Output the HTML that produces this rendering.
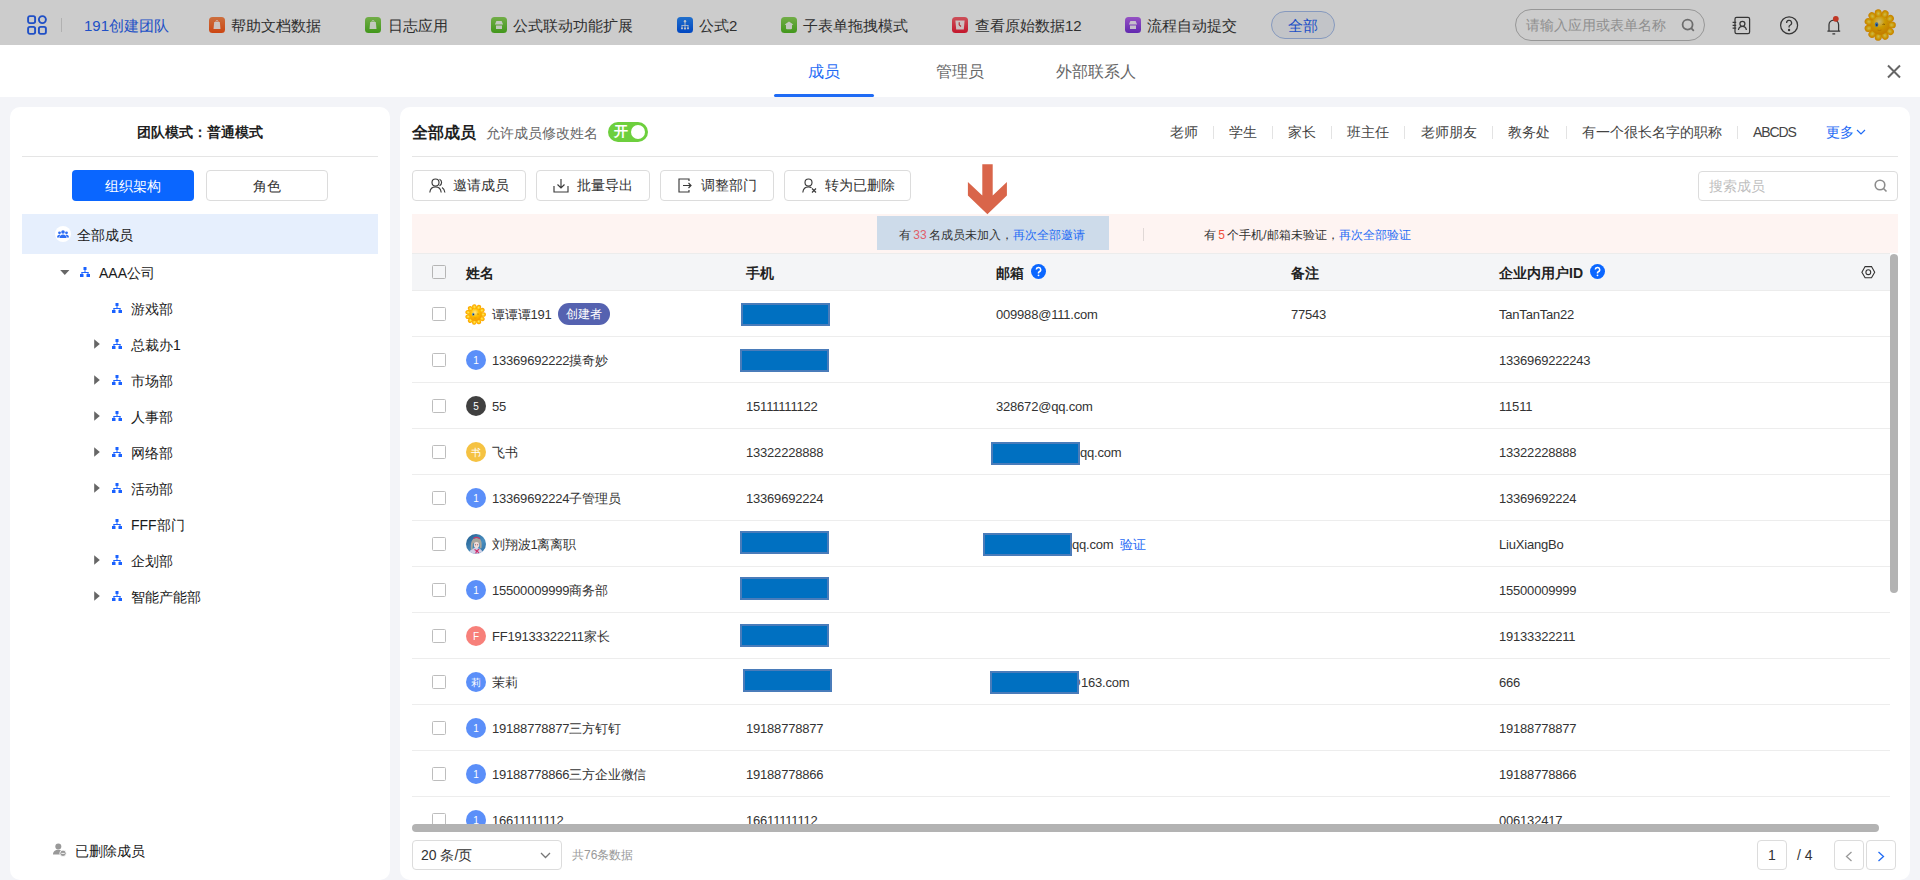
<!DOCTYPE html><html><head><meta charset="utf-8"><style>
*{box-sizing:border-box;margin:0;padding:0}
html,body{width:1920px;height:880px;overflow:hidden;background:#fff;font-family:"Liberation Sans",sans-serif;color:#333}
.a{position:absolute;white-space:nowrap}
.t{position:absolute;white-space:nowrap;line-height:20px}
#hdr{position:absolute;left:0;top:0;width:1920px;height:45px;background:#fff}
#mask{position:absolute;left:0;top:0;width:1920px;height:45px;background:rgba(0,0,0,0.2)}
.app{font-size:15px;color:#3b3b3b;top:16px}
.ico{position:absolute;top:17px;width:16px;height:16px}
.tab{font-size:16px;color:#666;top:62px}
.panel{position:absolute;background:#fff;border-radius:10px}
.btn{position:absolute;height:31px;border:1px solid #dcdcdc;border-radius:4px;background:#fff}
.b14{font-size:14px;color:#333}
.role{font-size:14px;color:#444;top:122px}
.rsep{position:absolute;top:126px;width:1px;height:13px;background:#e3e3e3}
.tree{font-size:14px;color:#1a1a1a}
.cell{font-size:13px;color:#333;letter-spacing:-0.2px}
.cb{position:absolute;width:14px;height:14px;border:1px solid #bdbdbd;border-radius:1.5px;background:#fff}
.av{position:absolute;width:20px;height:20px;border-radius:50%;color:#fff;font-size:10px;line-height:21px;text-align:center}
.red{position:absolute;width:89px;height:23px;background:#0070c1;border:2px solid #4a7cba}
.rl{position:absolute;left:412px;width:1478px;height:1px;background:#ededed}
</style></head><body>
<div id="hdr">
<svg class="a" style="left:27px;top:15px" width="20" height="20" viewBox="0 0 20 20" fill="none" stroke="#2864f8" stroke-width="1.9">
<rect x="1.1" y="1.1" width="7" height="7" rx="1.8"/><rect x="11.9" y="1.1" width="7" height="7" rx="3.5"/>
<rect x="1.1" y="11.9" width="7" height="7" rx="1.8"/><rect x="11.9" y="11.9" width="7" height="7" rx="1.8"/></svg>
<div class="a" style="left:61px;top:18px;width:1px;height:14px;background:#dedede"></div>
<div class="t app" style="left:84px;color:#2864f8">191创建团队</div>
<svg class="ico" style="left:209px" width="16" height="16" viewBox="0 0 16 16"><defs><linearGradient id="g209" x1="0" y1="0" x2="0" y2="1"><stop offset="0" stop-color="#ff8b4e"/><stop offset="1" stop-color="#ff5716"/></linearGradient></defs><rect width="16" height="16" rx="3.5" fill="url(#g209)"/><path d="M5.2 5h5.6l.7 7H4.5z" fill="#fff" opacity=".92"/><circle cx="8" cy="4.6" r="1.1" fill="none" stroke="#fff" stroke-width=".8" opacity=".92"/></svg>
<div class="t app" style="left:231px">帮助文档数据</div>
<svg class="ico" style="left:365px" width="16" height="16" viewBox="0 0 16 16"><defs><linearGradient id="g365" x1="0" y1="0" x2="0" y2="1"><stop offset="0" stop-color="#8fd95a"/><stop offset="1" stop-color="#52bd22"/></linearGradient></defs><rect width="16" height="16" rx="3.5" fill="url(#g365)"/><path d="M5.2 5h5.6l.7 7H4.5z" fill="#fff" opacity=".92"/><circle cx="8" cy="4.6" r="1.1" fill="none" stroke="#fff" stroke-width=".8" opacity=".92"/></svg>
<div class="t app" style="left:388px">日志应用</div>
<svg class="ico" style="left:491px" width="16" height="16" viewBox="0 0 16 16"><defs><linearGradient id="g491" x1="0" y1="0" x2="0" y2="1"><stop offset="0" stop-color="#8fd95a"/><stop offset="1" stop-color="#52bd22"/></linearGradient></defs><rect width="16" height="16" rx="3.5" fill="url(#g491)"/><path d="M5.4 4h5.2l1.5 3.4H3.9z M5 8.6h6V12H5z" fill="#fff" opacity=".92"/></svg>
<div class="t app" style="left:513px">公式联动功能扩展</div>
<svg class="ico" style="left:677px" width="16" height="16" viewBox="0 0 16 16"><defs><linearGradient id="g677" x1="0" y1="0" x2="0" y2="1"><stop offset="0" stop-color="#2a8cff"/><stop offset="1" stop-color="#0058f2"/></linearGradient></defs><rect width="16" height="16" rx="3.5" fill="url(#g677)"/><g fill="#fff" opacity=".92"><circle cx="8" cy="4.3" r="1.2"/><rect x="7.55" y="5" width=".9" height="6.5"/><rect x="4.6" y="8.2" width="6.8" height=".8"/><rect x="4.6" y="8.2" width=".8" height="2.5"/><rect x="10.6" y="8.2" width=".8" height="2.5"/><circle cx="5" cy="11.3" r="1.1"/><circle cx="8" cy="11.6" r="1.1"/><circle cx="11" cy="11.3" r="1.1"/></g></svg>
<div class="t app" style="left:699px">公式2</div>
<svg class="ico" style="left:781px" width="16" height="16" viewBox="0 0 16 16"><defs><linearGradient id="g781" x1="0" y1="0" x2="0" y2="1"><stop offset="0" stop-color="#8fd95a"/><stop offset="1" stop-color="#52bd22"/></linearGradient></defs><rect width="16" height="16" rx="3.5" fill="url(#g781)"/><path d="M8 4.6 12.3 7.6 11 8v3.2q0 1-1 1H6q-1 0-1-1V8l-1.3-.4z" fill="#fff" opacity=".92"/></svg>
<div class="t app" style="left:803px">子表单拖拽模式</div>
<svg class="ico" style="left:952px" width="16" height="16" viewBox="0 0 16 16"><defs><linearGradient id="g952" x1="0" y1="0" x2="0" y2="1"><stop offset="0" stop-color="#ff6470"/><stop offset="1" stop-color="#f51c38"/></linearGradient></defs><rect width="16" height="16" rx="3.5" fill="url(#g952)"/><path d="M3.4 3.6h9.2l-.8 8.9H4.2z" fill="#fff" opacity=".92"/><path d="M7.2 5.2v2.6l1.8 1.7" stroke="#e0303c" stroke-width="1.1" fill="none"/></svg>
<div class="t app" style="left:975px">查看原始数据12</div>
<svg class="ico" style="left:1125px" width="16" height="16" viewBox="0 0 16 16"><defs><linearGradient id="g1125" x1="0" y1="0" x2="0" y2="1"><stop offset="0" stop-color="#bb66f5"/><stop offset="1" stop-color="#7a33dc"/></linearGradient></defs><rect width="16" height="16" rx="3.5" fill="url(#g1125)"/><path d="M5.4 4h5.2l1.5 3.4H3.9z M5 8.6h6V12H5z" fill="#fff" opacity=".92"/></svg>
<div class="t app" style="left:1147px">流程自动提交</div>
<div class="a" style="left:1271px;top:11px;width:64px;height:28px;border-radius:14px;background:#f3f6fb;border:1px solid #a8c0ee"></div>
<div class="t app" style="left:1288px;top:16px;color:#2864f8">全部</div>
<div class="a" style="left:1515px;top:9px;width:190px;height:32px;border-radius:16px;border:1px solid #bdbdbd;background:#fff"></div>
<div class="t" style="left:1526px;top:15px;font-size:14px;color:#b3b3b3">请输入应用或表单名称</div>
<svg class="a" style="left:1681px;top:18px" width="15" height="14" viewBox="0 0 15 14" fill="none" stroke="#888" stroke-width="1.8"><circle cx="6.6" cy="6.6" r="5"/><path d="M10.2 10.2l2.6 2.6"/></svg>
<svg class="a" style="left:1720px;top:8px" width="130" height="32" viewBox="1720 8 130 32" fill="none" stroke="#444" stroke-width="1.25"><rect x="1735" y="17.4" width="14.6" height="16.2" rx="1.6"/><path d="M1732.6 22.4h3.6M1732.6 25.3h3.6M1732.6 28.2h3.6"/><circle cx="1742.4" cy="23.8" r="2.5"/><path d="M1738.4 30c.4-2.400 1.900-3.600 4-3.600s3.600 1.200 4 3.600"/><circle cx="1789.1" cy="25.3" r="8.5"/><path d="M1786.6 22.900a2.500 2.500 0 1 1 3.500 2.300c-.600.300-1 .700-1 1.400v.800"/><path d="M1827.4 31.2h12.8M1829 31.2v-6.400a4.800 4.800 0 0 1 9.600 0v6.400M1832.400 33.900h2.800"/><circle cx="1789.1" cy="30" r=".55" fill="#444"/><circle cx="1835.8" cy="18.8" r="2.9" fill="#f0452f" stroke="none"/></svg>
<svg class="a" style="left:1864px;top:9px" width="32" height="32" viewBox="0 0 32 32"><defs><radialGradient id="sunA" cx=".5" cy=".5" r=".6"><stop offset="0" stop-color="#ffec60"/><stop offset=".55" stop-color="#ffb800"/><stop offset="1" stop-color="#f39000"/></radialGradient><radialGradient id="sunAf" cx=".45" cy=".3" r=".7"><stop offset="0" stop-color="#ffe890"/><stop offset=".45" stop-color="#ffc000"/><stop offset="1" stop-color="#f39a00"/></radialGradient></defs><g fill="url(#sunA)"><ellipse cx="27.60" cy="16.00" rx="4.3" ry="3.6" transform="rotate(0.0 27.60 16.00)"/><ellipse cx="25.76" cy="22.27" rx="4.3" ry="3.6" transform="rotate(32.7 25.76 22.27)"/><ellipse cx="20.82" cy="26.55" rx="4.3" ry="3.6" transform="rotate(65.5 20.82 26.55)"/><ellipse cx="14.35" cy="27.48" rx="4.3" ry="3.6" transform="rotate(98.2 14.35 27.48)"/><ellipse cx="8.40" cy="24.77" rx="4.3" ry="3.6" transform="rotate(130.9 8.40 24.77)"/><ellipse cx="4.87" cy="19.27" rx="4.3" ry="3.6" transform="rotate(163.6 4.87 19.27)"/><ellipse cx="4.87" cy="12.73" rx="4.3" ry="3.6" transform="rotate(196.4 4.87 12.73)"/><ellipse cx="8.40" cy="7.23" rx="4.3" ry="3.6" transform="rotate(229.1 8.40 7.23)"/><ellipse cx="14.35" cy="4.52" rx="4.3" ry="3.6" transform="rotate(261.8 14.35 4.52)"/><ellipse cx="20.82" cy="5.45" rx="4.3" ry="3.6" transform="rotate(294.5 20.82 5.45)"/><ellipse cx="25.76" cy="9.73" rx="4.3" ry="3.6" transform="rotate(327.3 25.76 9.73)"/></g><circle cx="16" cy="16.5" r="9.3" fill="url(#sunAf)"/><ellipse cx="12.6" cy="15.6" rx="1.7" ry="2.4" fill="#4a8ad0"/><circle cx="12.8" cy="16" r=".8" fill="#102030"/><path d="M18.5 15.5q1.3-.8 2.4 0" stroke="#8a5a00" stroke-width=".8" fill="none"/><path d="M13.5 21q2 1 4 0" stroke="#d98a00" stroke-width=".8" fill="none"/></svg>
</div>
<div id="mask"></div>
<div class="a" style="left:0;top:45px;width:1920px;height:52px;background:#fff"></div>
<div class="a" style="left:0;top:97px;width:1920px;height:783px;background:#f3f4f8"></div>
<div class="t tab" style="left:808px;color:#1f6bf5">成员</div>
<div class="a" style="left:774px;top:94px;width:100px;height:3px;border-radius:2px;background:#1f6bf5"></div>
<div class="t tab" style="left:936px">管理员</div>
<div class="t tab" style="left:1056px">外部联系人</div>
<svg class="a" style="left:1886px;top:64px" width="16" height="15" viewBox="0 0 16 15" stroke="#666" stroke-width="2"><path d="M2 1.5l12 12M14 1.5l-12 12"/></svg>
<div class="panel" style="left:10px;top:107px;width:380px;height:773px"></div>
<div class="panel" style="left:400px;top:107px;width:1510px;height:773px"></div>
<div class="t" style="left:137px;top:122px;font-size:14px;font-weight:bold;color:#1f1f1f">团队模式：普通模式</div>
<div class="a" style="left:22px;top:156px;width:356px;height:1px;background:#e5e5e5"></div>
<div class="a" style="left:72px;top:170px;width:122px;height:31px;border-radius:4px;background:#0a66ff"></div>
<div class="t" style="left:105px;top:176px;font-size:14px;color:#fff">组织架构</div>
<div class="btn" style="left:206px;top:170px;width:122px"></div>
<div class="t" style="left:253px;top:176px;font-size:14px;color:#333">角色</div>
<div class="a" style="left:22px;top:214px;width:356px;height:40px;background:#e6effd"></div>
<div class="a" style="left:55px;top:226px;width:16px;height:16px;border-radius:50%;background:#fff"></div>
<svg class="a" style="left:57px;top:230px" width="12" height="8" viewBox="0 0 12 8" fill="#2f6ff5"><circle cx="6" cy="2" r="1.8"/><circle cx="2.5" cy="2.8" r="1.4"/><circle cx="9.5" cy="2.8" r="1.4"/><path d="M2.5 8c0-2.3 1.5-3.6 3.5-3.6S9.5 5.7 9.5 8z"/><path d="M0 7.6c0-1.8.9-2.9 2.4-2.9.5 0 .8.1 1 .2C2.6 5.6 2.2 6.6 2.2 7.6zM12 7.6c0-1.8-.9-2.9-2.4-2.9-.5 0-.8.1-1 .2.8.7 1.2 1.7 1.2 2.7z"/></svg>
<div class="t tree" style="left:77px;top:225px">全部成员</div>
<svg class="a" style="left:60px;top:270px" width="10" height="6" viewBox="0 0 10 6" fill="#666"><path d="M.2 0h9.2L4.8 5z"/></svg>
<svg class="a" style="left:80px;top:267px" width="10" height="10" viewBox="0 0 10 10" fill="#1a62ff"><rect x="3.5" y="0" width="3" height="3"/><rect x="4.5" y="3" width="1" height="2.5"/><rect x="1.5" y="5" width="7" height="1"/><rect x="1.5" y="5" width="1" height="2"/><rect x="7.5" y="5" width="1" height="2"/><rect x="0" y="7" width="3.5" height="3"/><rect x="6.5" y="7" width="3.5" height="3"/></svg>
<div class="t tree" style="left:99px;top:263px">AAA公司</div>
<svg class="a" style="left:112px;top:303px" width="10" height="10" viewBox="0 0 10 10" fill="#1a62ff"><rect x="3.5" y="0" width="3" height="3"/><rect x="4.5" y="3" width="1" height="2.5"/><rect x="1.5" y="5" width="7" height="1"/><rect x="1.5" y="5" width="1" height="2"/><rect x="7.5" y="5" width="1" height="2"/><rect x="0" y="7" width="3.5" height="3"/><rect x="6.5" y="7" width="3.5" height="3"/></svg>
<div class="t tree" style="left:131px;top:299px">游戏部</div>
<svg class="a" style="left:94px;top:339px" width="6" height="10" viewBox="0 0 6 10" fill="#666"><path d="M.2 .3v9.4l5.6-4.7z"/></svg>
<svg class="a" style="left:112px;top:339px" width="10" height="10" viewBox="0 0 10 10" fill="#1a62ff"><rect x="3.5" y="0" width="3" height="3"/><rect x="4.5" y="3" width="1" height="2.5"/><rect x="1.5" y="5" width="7" height="1"/><rect x="1.5" y="5" width="1" height="2"/><rect x="7.5" y="5" width="1" height="2"/><rect x="0" y="7" width="3.5" height="3"/><rect x="6.5" y="7" width="3.5" height="3"/></svg>
<div class="t tree" style="left:131px;top:335px">总裁办1</div>
<svg class="a" style="left:94px;top:375px" width="6" height="10" viewBox="0 0 6 10" fill="#666"><path d="M.2 .3v9.4l5.6-4.7z"/></svg>
<svg class="a" style="left:112px;top:375px" width="10" height="10" viewBox="0 0 10 10" fill="#1a62ff"><rect x="3.5" y="0" width="3" height="3"/><rect x="4.5" y="3" width="1" height="2.5"/><rect x="1.5" y="5" width="7" height="1"/><rect x="1.5" y="5" width="1" height="2"/><rect x="7.5" y="5" width="1" height="2"/><rect x="0" y="7" width="3.5" height="3"/><rect x="6.5" y="7" width="3.5" height="3"/></svg>
<div class="t tree" style="left:131px;top:371px">市场部</div>
<svg class="a" style="left:94px;top:411px" width="6" height="10" viewBox="0 0 6 10" fill="#666"><path d="M.2 .3v9.4l5.6-4.7z"/></svg>
<svg class="a" style="left:112px;top:411px" width="10" height="10" viewBox="0 0 10 10" fill="#1a62ff"><rect x="3.5" y="0" width="3" height="3"/><rect x="4.5" y="3" width="1" height="2.5"/><rect x="1.5" y="5" width="7" height="1"/><rect x="1.5" y="5" width="1" height="2"/><rect x="7.5" y="5" width="1" height="2"/><rect x="0" y="7" width="3.5" height="3"/><rect x="6.5" y="7" width="3.5" height="3"/></svg>
<div class="t tree" style="left:131px;top:407px">人事部</div>
<svg class="a" style="left:94px;top:447px" width="6" height="10" viewBox="0 0 6 10" fill="#666"><path d="M.2 .3v9.4l5.6-4.7z"/></svg>
<svg class="a" style="left:112px;top:447px" width="10" height="10" viewBox="0 0 10 10" fill="#1a62ff"><rect x="3.5" y="0" width="3" height="3"/><rect x="4.5" y="3" width="1" height="2.5"/><rect x="1.5" y="5" width="7" height="1"/><rect x="1.5" y="5" width="1" height="2"/><rect x="7.5" y="5" width="1" height="2"/><rect x="0" y="7" width="3.5" height="3"/><rect x="6.5" y="7" width="3.5" height="3"/></svg>
<div class="t tree" style="left:131px;top:443px">网络部</div>
<svg class="a" style="left:94px;top:483px" width="6" height="10" viewBox="0 0 6 10" fill="#666"><path d="M.2 .3v9.4l5.6-4.7z"/></svg>
<svg class="a" style="left:112px;top:483px" width="10" height="10" viewBox="0 0 10 10" fill="#1a62ff"><rect x="3.5" y="0" width="3" height="3"/><rect x="4.5" y="3" width="1" height="2.5"/><rect x="1.5" y="5" width="7" height="1"/><rect x="1.5" y="5" width="1" height="2"/><rect x="7.5" y="5" width="1" height="2"/><rect x="0" y="7" width="3.5" height="3"/><rect x="6.5" y="7" width="3.5" height="3"/></svg>
<div class="t tree" style="left:131px;top:479px">活动部</div>
<svg class="a" style="left:112px;top:519px" width="10" height="10" viewBox="0 0 10 10" fill="#1a62ff"><rect x="3.5" y="0" width="3" height="3"/><rect x="4.5" y="3" width="1" height="2.5"/><rect x="1.5" y="5" width="7" height="1"/><rect x="1.5" y="5" width="1" height="2"/><rect x="7.5" y="5" width="1" height="2"/><rect x="0" y="7" width="3.5" height="3"/><rect x="6.5" y="7" width="3.5" height="3"/></svg>
<div class="t tree" style="left:131px;top:515px">FFF部门</div>
<svg class="a" style="left:94px;top:555px" width="6" height="10" viewBox="0 0 6 10" fill="#666"><path d="M.2 .3v9.4l5.6-4.7z"/></svg>
<svg class="a" style="left:112px;top:555px" width="10" height="10" viewBox="0 0 10 10" fill="#1a62ff"><rect x="3.5" y="0" width="3" height="3"/><rect x="4.5" y="3" width="1" height="2.5"/><rect x="1.5" y="5" width="7" height="1"/><rect x="1.5" y="5" width="1" height="2"/><rect x="7.5" y="5" width="1" height="2"/><rect x="0" y="7" width="3.5" height="3"/><rect x="6.5" y="7" width="3.5" height="3"/></svg>
<div class="t tree" style="left:131px;top:551px">企划部</div>
<svg class="a" style="left:94px;top:591px" width="6" height="10" viewBox="0 0 6 10" fill="#666"><path d="M.2 .3v9.4l5.6-4.7z"/></svg>
<svg class="a" style="left:112px;top:591px" width="10" height="10" viewBox="0 0 10 10" fill="#1a62ff"><rect x="3.5" y="0" width="3" height="3"/><rect x="4.5" y="3" width="1" height="2.5"/><rect x="1.5" y="5" width="7" height="1"/><rect x="1.5" y="5" width="1" height="2"/><rect x="7.5" y="5" width="1" height="2"/><rect x="0" y="7" width="3.5" height="3"/><rect x="6.5" y="7" width="3.5" height="3"/></svg>
<div class="t tree" style="left:131px;top:587px">智能产能部</div>
<svg class="a" style="left:53px;top:843px" width="14" height="14" viewBox="0 0 14 14"><circle cx="5.3" cy="3.6" r="3" fill="#999"/><path d="M0 11.5c0-3 2.2-4.8 5.3-4.8 1.4 0 2.5.4 3.3 1A3.6 3.6 0 0 0 7.6 11.5z" fill="#999"/><circle cx="10" cy="10.3" r="3.2" fill="#999" stroke="#fff" stroke-width=".9"/><rect x="8.3" y="9.9" width="3.4" height=".9" fill="#fff"/></svg>
<div class="t tree" style="left:75px;top:841px">已删除成员</div>
<div class="t" style="left:412px;top:123px;font-size:16px;font-weight:bold;color:#1f1f1f">全部成员</div>
<div class="t" style="left:486px;top:123px;font-size:14px;color:#666">允许成员修改姓名</div>
<div class="a" style="left:608px;top:122px;width:40px;height:20px;border-radius:10px;background:#6dcf3d"></div>
<div class="a" style="left:631px;top:125px;width:14px;height:14px;border-radius:50%;background:#fff"></div>
<div class="t" style="left:614px;top:121px;font-size:14px;font-weight:bold;color:#fff">开</div>
<div class="t role" style="left:1170px">老师</div>
<div class="t role" style="left:1229px">学生</div>
<div class="t role" style="left:1288px">家长</div>
<div class="t role" style="left:1347px">班主任</div>
<div class="t role" style="left:1421px">老师朋友</div>
<div class="t role" style="left:1508px">教务处</div>
<div class="t role" style="left:1582px">有一个很长名字的职称</div>
<div class="t role" style="left:1753px"><span style="letter-spacing:-1.1px">ABCDS</span></div>
<div class="rsep" style="left:1213px"></div>
<div class="rsep" style="left:1272px"></div>
<div class="rsep" style="left:1331px"></div>
<div class="rsep" style="left:1404px"></div>
<div class="rsep" style="left:1492px"></div>
<div class="rsep" style="left:1566px"></div>
<div class="rsep" style="left:1737px"></div>
<div class="t role" style="left:1826px;color:#1f6bf5">更多</div>
<svg class="a" style="left:1856px;top:129px" width="10" height="6" viewBox="0 0 10 6" fill="none" stroke="#1f6bf5" stroke-width="1.2"><path d="M1 1l4 4 4-4"/></svg>
<div class="a" style="left:412px;top:156px;width:1486px;height:1px;background:#e5e5e5"></div>
<div class="btn" style="left:412px;top:170px;width:114px"></div>
<svg class="a" style="left:429px;top:178px" width="17" height="15" viewBox="0 0 17 15" fill="none" stroke="#3a3a3a" stroke-width="1.15"><circle cx="6.5" cy="4.5" r="3.5"/><path d="M.8 14.5c.4-3.6 2.6-5.6 5.7-5.6s5.3 2 5.7 5.6"/><path d="M10.5 1.3a3.5 3.5 0 0 1 0 6.4M13 9.5c1.6.9 2.6 2.600 2.900 5"/></svg>
<div class="t b14" style="left:453px;top:175px">邀请成员</div>
<div class="btn" style="left:536px;top:170px;width:114px"></div>
<svg class="a" style="left:553px;top:178px" width="16" height="15" viewBox="0 0 16 15" fill="none" stroke="#3a3a3a" stroke-width="1.15"><path d="M1 8v6h14V8M8 1v9M4.5 6.5 8 10l3.5-3.5"/></svg>
<div class="t b14" style="left:577px;top:175px">批量导出</div>
<div class="btn" style="left:660px;top:170px;width:114px"></div>
<svg class="a" style="left:678px;top:178px" width="14" height="15" viewBox="0 0 14 15" fill="none" stroke="#3a3a3a" stroke-width="1.15"><path d="M11 3V1H1v13h10v-2"/><path d="M5 7.5h8M10.5 5 13 7.5 10.5 10"/></svg>
<div class="t b14" style="left:701px;top:175px">调整部门</div>
<div class="btn" style="left:784px;top:170px;width:127px"></div>
<svg class="a" style="left:802px;top:178px" width="15" height="15" viewBox="0 0 15 15" fill="none" stroke="#3a3a3a" stroke-width="1.15"><circle cx="6.5" cy="4.5" r="3.5"/><path d="M.8 14.5c.4-3.6 2.6-5.6 5.7-5.6 1.2 0 2.200.3 3 .8"/><path d="M10 10.5l4 4M14 10.5l-4 4" stroke-width="1.2"/></svg>
<div class="t b14" style="left:825px;top:175px">转为已删除</div>
<div class="btn" style="left:1698px;top:171px;width:200px;height:30px;border-radius:4px"></div>
<div class="t" style="left:1709px;top:176px;font-size:14px;color:#bfbfbf">搜索成员</div>
<svg class="a" style="left:1874px;top:179px" width="14" height="14" viewBox="0 0 14 14" fill="none" stroke="#8c8c8c" stroke-width="1.6"><circle cx="6" cy="6" r="4.8"/><path d="M9.5 9.5l3 3"/></svg>
<div class="a" style="left:412px;top:214px;width:1486px;height:39px;background:#fef4f2"></div>
<div class="a" style="left:877px;top:216px;width:232px;height:34px;background:#cddbea"></div>
<div class="t" style="left:899px;top:225px;font-size:12px;color:#333;word-spacing:-1px">有 <span style="color:#e0606a">33</span> 名成员未加入，<span style="color:#1f6bf5">再次全部邀请</span></div>
<div class="a" style="left:1143px;top:228px;width:1px;height:13px;background:#e0d8d6"></div>
<div class="t" style="left:1204px;top:225px;font-size:12px;color:#333;word-spacing:-1px">有 <span style="color:#f0503c">5</span> 个手机/邮箱未验证，<span style="color:#1f6bf5">再次全部验证</span></div>
<svg class="a" style="left:960px;top:160px" width="55" height="60" viewBox="960 160 55 60"><path d="M982.3 164.2H992.7V195.6L1006.9 182V195.6L987.4 214.3 967.9 195.6V182L982.3 195.6Z" fill="#d9654a"/></svg>
<div class="a" style="left:412px;top:253px;width:1478px;height:38px;background:#f4f5f7;border-top:1px solid #ececec;border-bottom:1px solid #ececec"></div>
<div class="cb" style="left:432px;top:265px;background:transparent;border-color:#b5b5b5"></div>
<div class="t" style="left:466px;top:263px;font-size:14px;font-weight:bold;color:#222">姓名</div>
<div class="t" style="left:746px;top:263px;font-size:14px;font-weight:bold;color:#222">手机</div>
<div class="t" style="left:996px;top:263px;font-size:14px;font-weight:bold;color:#222">邮箱</div>
<div class="t" style="left:1291px;top:263px;font-size:14px;font-weight:bold;color:#222">备注</div>
<div class="t" style="left:1499px;top:263px;font-size:14px;font-weight:bold;color:#222">企业内用户ID</div>
<svg class="a" style="left:1031px;top:264px" width="15" height="15" viewBox="0 0 15 15"><circle cx="7.5" cy="7.5" r="7.5" fill="#0a66ff"/><path d="M5.3 5.6a2.2 2.2 0 1 1 3 2.1c-.5.2-.8.6-.8 1.1v.7" stroke="#fff" stroke-width="1.5" fill="none"/><circle cx="7.5" cy="11.3" r=".9" fill="#fff"/></svg>
<svg class="a" style="left:1590px;top:264px" width="15" height="15" viewBox="0 0 15 15"><circle cx="7.5" cy="7.5" r="7.5" fill="#0a66ff"/><path d="M5.3 5.6a2.2 2.2 0 1 1 3 2.1c-.5.2-.8.6-.8 1.1v.7" stroke="#fff" stroke-width="1.5" fill="none"/><circle cx="7.5" cy="11.3" r=".9" fill="#fff"/></svg>
<svg class="a" style="left:1861px;top:266px" width="15" height="13" viewBox="0 0 15 13" fill="none" stroke="#333" stroke-width="1.1"><path d="M4.1 .6h6.4l3.2 5.6-3.2 5.6H4.1L.9 6.2z"/><circle cx="7.3" cy="6.2" r="2.4"/></svg>
<div class="a" style="left:412px;top:291px;width:1478px;height:533px;overflow:hidden">
<div class="cb" style="left:20px;top:16px"></div>
<svg class="a" style="left:53px;top:13px" width="21" height="21" viewBox="0 0 32 32"><defs><radialGradient id="sunB" cx=".5" cy=".5" r=".6"><stop offset="0" stop-color="#ffec60"/><stop offset=".55" stop-color="#ffb800"/><stop offset="1" stop-color="#f39000"/></radialGradient><radialGradient id="sunBf" cx=".45" cy=".3" r=".7"><stop offset="0" stop-color="#ffe890"/><stop offset=".45" stop-color="#ffc000"/><stop offset="1" stop-color="#f39a00"/></radialGradient></defs><g fill="url(#sunB)"><ellipse cx="27.60" cy="16.00" rx="4.3" ry="3.6" transform="rotate(0.0 27.60 16.00)"/><ellipse cx="25.76" cy="22.27" rx="4.3" ry="3.6" transform="rotate(32.7 25.76 22.27)"/><ellipse cx="20.82" cy="26.55" rx="4.3" ry="3.6" transform="rotate(65.5 20.82 26.55)"/><ellipse cx="14.35" cy="27.48" rx="4.3" ry="3.6" transform="rotate(98.2 14.35 27.48)"/><ellipse cx="8.40" cy="24.77" rx="4.3" ry="3.6" transform="rotate(130.9 8.40 24.77)"/><ellipse cx="4.87" cy="19.27" rx="4.3" ry="3.6" transform="rotate(163.6 4.87 19.27)"/><ellipse cx="4.87" cy="12.73" rx="4.3" ry="3.6" transform="rotate(196.4 4.87 12.73)"/><ellipse cx="8.40" cy="7.23" rx="4.3" ry="3.6" transform="rotate(229.1 8.40 7.23)"/><ellipse cx="14.35" cy="4.52" rx="4.3" ry="3.6" transform="rotate(261.8 14.35 4.52)"/><ellipse cx="20.82" cy="5.45" rx="4.3" ry="3.6" transform="rotate(294.5 20.82 5.45)"/><ellipse cx="25.76" cy="9.73" rx="4.3" ry="3.6" transform="rotate(327.3 25.76 9.73)"/></g><circle cx="16" cy="16.5" r="9.3" fill="url(#sunBf)"/><ellipse cx="12.6" cy="15.6" rx="1.7" ry="2.4" fill="#4a8ad0"/><circle cx="12.8" cy="16" r=".8" fill="#102030"/><path d="M18.5 15.5q1.3-.8 2.4 0" stroke="#8a5a00" stroke-width=".8" fill="none"/><path d="M13.5 21q2 1 4 0" stroke="#d98a00" stroke-width=".8" fill="none"/></svg>
<div class="t cell" style="left:80px;top:14px">谭谭谭191</div>
<div class="a" style="left:146px;top:12px;width:52px;height:22px;border-radius:11px;background:#5562b0;color:#fff;font-size:12px;line-height:22px;text-align:center">创建者</div>
<div class="t cell" style="left:584px;top:14px">009988@111.com</div>
<div class="t cell" style="left:879px;top:14px">77543</div>
<div class="t cell" style="left:1087px;top:14px">TanTanTan22</div>
<div class="a" style="left:0;top:45px;width:1478px;height:1px;background:#ededed"></div>
<div class="cb" style="left:20px;top:62px"></div>
<div class="av" style="left:54px;top:59px;background:#5b8ff9">1</div>
<div class="t cell" style="left:80px;top:60px">13369692222摸奇妙</div>
<div class="t cell" style="left:1087px;top:60px">1336969222243</div>
<div class="a" style="left:0;top:91px;width:1478px;height:1px;background:#ededed"></div>
<div class="cb" style="left:20px;top:108px"></div>
<div class="av" style="left:54px;top:105px;background:#404040">5</div>
<div class="t cell" style="left:80px;top:106px">55</div>
<div class="t cell" style="left:334px;top:106px">15111111122</div>
<div class="t cell" style="left:584px;top:106px">328672@qq.com</div>
<div class="t cell" style="left:1087px;top:106px">11511</div>
<div class="a" style="left:0;top:137px;width:1478px;height:1px;background:#ededed"></div>
<div class="cb" style="left:20px;top:154px"></div>
<div class="av" style="left:54px;top:151px;background:#f5c242">书</div>
<div class="t cell" style="left:80px;top:152px">飞书</div>
<div class="t cell" style="left:334px;top:152px">13322228888</div>
<div class="t cell" style="left:1087px;top:152px">13322228888</div>
<div class="a" style="left:0;top:183px;width:1478px;height:1px;background:#ededed"></div>
<div class="cb" style="left:20px;top:200px"></div>
<div class="av" style="left:54px;top:197px;background:#5b8ff9">1</div>
<div class="t cell" style="left:80px;top:198px">13369692224子管理员</div>
<div class="t cell" style="left:334px;top:198px">13369692224</div>
<div class="t cell" style="left:1087px;top:198px">13369692224</div>
<div class="a" style="left:0;top:229px;width:1478px;height:1px;background:#ededed"></div>
<div class="cb" style="left:20px;top:246px"></div>
<svg class="a" style="left:54px;top:243px" width="20" height="20" viewBox="0 0 20 20"><defs><clipPath id="pc"><circle cx="10" cy="10" r="10"/></clipPath><linearGradient id="pbg" x1="0" y1="0" x2="1" y2="1"><stop offset="0" stop-color="#1f5a8c"/><stop offset=".6" stop-color="#4a8fc0"/><stop offset="1" stop-color="#2a6aa0"/></linearGradient></defs><g clip-path="url(#pc)"><rect width="20" height="20" fill="url(#pbg)"/><path d="M3 20c.5-4 3-6 7-6s6.5 2 7 6z" fill="#cfd0e6"/><path d="M5 16c-.5-6 0-12 5.5-12S16 9 15.5 14l-1.5.5-.5-5h-6.500l-.5 6z" fill="#a9a69c"/><ellipse cx="10.5" cy="11" rx="2.7" ry="3.1" fill="#efdcd8"/><path d="M7.5 4.5q2.500-2.200 6.500.2" stroke="#c23a6a" stroke-width="1.3" fill="none"/><circle cx="9.4" cy="10.8" r=".5" fill="#7a2a2a"/><circle cx="11.7" cy="10.8" r=".5" fill="#7a2a2a"/><path d="M8.500 15.500l2.200 1.200 2.500-1.500M10.700 16.700l-1 2.800M10.700 16.700l2.300 2.500" stroke="#cf2f6c" stroke-width="1.200" fill="none"/></g></svg>
<div class="t cell" style="left:80px;top:244px">刘翔波1离离职</div>
<div class="t cell" style="left:1087px;top:244px">LiuXiangBo</div>
<div class="a" style="left:0;top:275px;width:1478px;height:1px;background:#ededed"></div>
<div class="cb" style="left:20px;top:292px"></div>
<div class="av" style="left:54px;top:289px;background:#5b8ff9">1</div>
<div class="t cell" style="left:80px;top:290px">15500009999商务部</div>
<div class="t cell" style="left:1087px;top:290px">15500009999</div>
<div class="a" style="left:0;top:321px;width:1478px;height:1px;background:#ededed"></div>
<div class="cb" style="left:20px;top:338px"></div>
<div class="av" style="left:54px;top:335px;background:#f7807a">F</div>
<div class="t cell" style="left:80px;top:336px">FF19133322211家长</div>
<div class="t cell" style="left:1087px;top:336px">19133322211</div>
<div class="a" style="left:0;top:367px;width:1478px;height:1px;background:#ededed"></div>
<div class="cb" style="left:20px;top:384px"></div>
<div class="av" style="left:54px;top:381px;background:#5b8ff9">莉</div>
<div class="t cell" style="left:80px;top:382px">茉莉</div>
<div class="t cell" style="left:1087px;top:382px">666</div>
<div class="a" style="left:0;top:413px;width:1478px;height:1px;background:#ededed"></div>
<div class="cb" style="left:20px;top:430px"></div>
<div class="av" style="left:54px;top:427px;background:#5b8ff9">1</div>
<div class="t cell" style="left:80px;top:428px">19188778877三方钉钉</div>
<div class="t cell" style="left:334px;top:428px">19188778877</div>
<div class="t cell" style="left:1087px;top:428px">19188778877</div>
<div class="a" style="left:0;top:459px;width:1478px;height:1px;background:#ededed"></div>
<div class="cb" style="left:20px;top:476px"></div>
<div class="av" style="left:54px;top:473px;background:#5b8ff9">1</div>
<div class="t cell" style="left:80px;top:474px">19188778866三方企业微信</div>
<div class="t cell" style="left:334px;top:474px">19188778866</div>
<div class="t cell" style="left:1087px;top:474px">19188778866</div>
<div class="a" style="left:0;top:505px;width:1478px;height:1px;background:#ededed"></div>
<div class="cb" style="left:20px;top:522px"></div>
<div class="av" style="left:54px;top:519px;background:#5b8ff9">1</div>
<div class="t cell" style="left:80px;top:520px">16611111112</div>
<div class="t cell" style="left:334px;top:520px">16611111112</div>
<div class="t cell" style="left:1087px;top:520px">006132417</div>
<div class="a" style="left:0;top:551px;width:1478px;height:1px;background:#ededed"></div>
</div>
<div class="red" style="left:741px;top:303px"></div>
<div class="red" style="left:740px;top:349px"></div>
<div class="red" style="left:740px;top:531px"></div>
<div class="red" style="left:740px;top:577px"></div>
<div class="red" style="left:740px;top:624px"></div>
<div class="red" style="left:743px;top:669px"></div>
<div class="t cell" style="left:1080px;top:443px">qq.com</div><div class="red" style="left:991px;top:442px"></div>
<div class="t cell" style="left:1072px;top:535px">qq.com <span style="color:#1f6bf5;margin-left:3px">验证</span></div><div class="red" style="left:983px;top:533px"></div>
<div class="t cell" style="left:1068px;top:673px">@163.com</div><div class="red" style="left:990px;top:671px"></div>
<div class="a" style="left:1890px;top:254px;width:8px;height:339px;border-radius:4px;background:#b3b3b3"></div>
<div class="a" style="left:412px;top:824px;width:1467px;height:8px;border-radius:4px;background:#b3b3b3"></div>
<div class="btn" style="left:412px;top:840px;width:150px;height:30px"></div>
<div class="t" style="left:421px;top:845px;font-size:14px;color:#333">20 条/页</div>
<svg class="a" style="left:540px;top:852px" width="11" height="7" viewBox="0 0 11 7" fill="none" stroke="#777" stroke-width="1.3"><path d="M1 1l4.5 4.5L10 1"/></svg>
<div class="t" style="left:572px;top:845px;font-size:12px;color:#999">共76条数据</div>
<div class="btn" style="left:1757px;top:840px;width:30px;height:30px"></div>
<div class="t" style="left:1768px;top:845px;font-size:14px;color:#333">1</div>
<div class="t" style="left:1797px;top:845px;font-size:14px;color:#333">/ 4</div>
<div class="btn" style="left:1834px;top:840px;width:30px;height:30px"></div>
<svg class="a" style="left:1845px;top:851px" width="8" height="11" viewBox="0 0 8 11" fill="none" stroke="#999" stroke-width="1.3"><path d="M6.5 1 1.5 5.5l5 4.5"/></svg>
<div class="btn" style="left:1866px;top:840px;width:30px;height:30px"></div>
<svg class="a" style="left:1877px;top:851px" width="8" height="11" viewBox="0 0 8 11" fill="none" stroke="#1f6bf5" stroke-width="1.3"><path d="M1.5 1l5 4.5-5 4.5"/></svg>
</body></html>
